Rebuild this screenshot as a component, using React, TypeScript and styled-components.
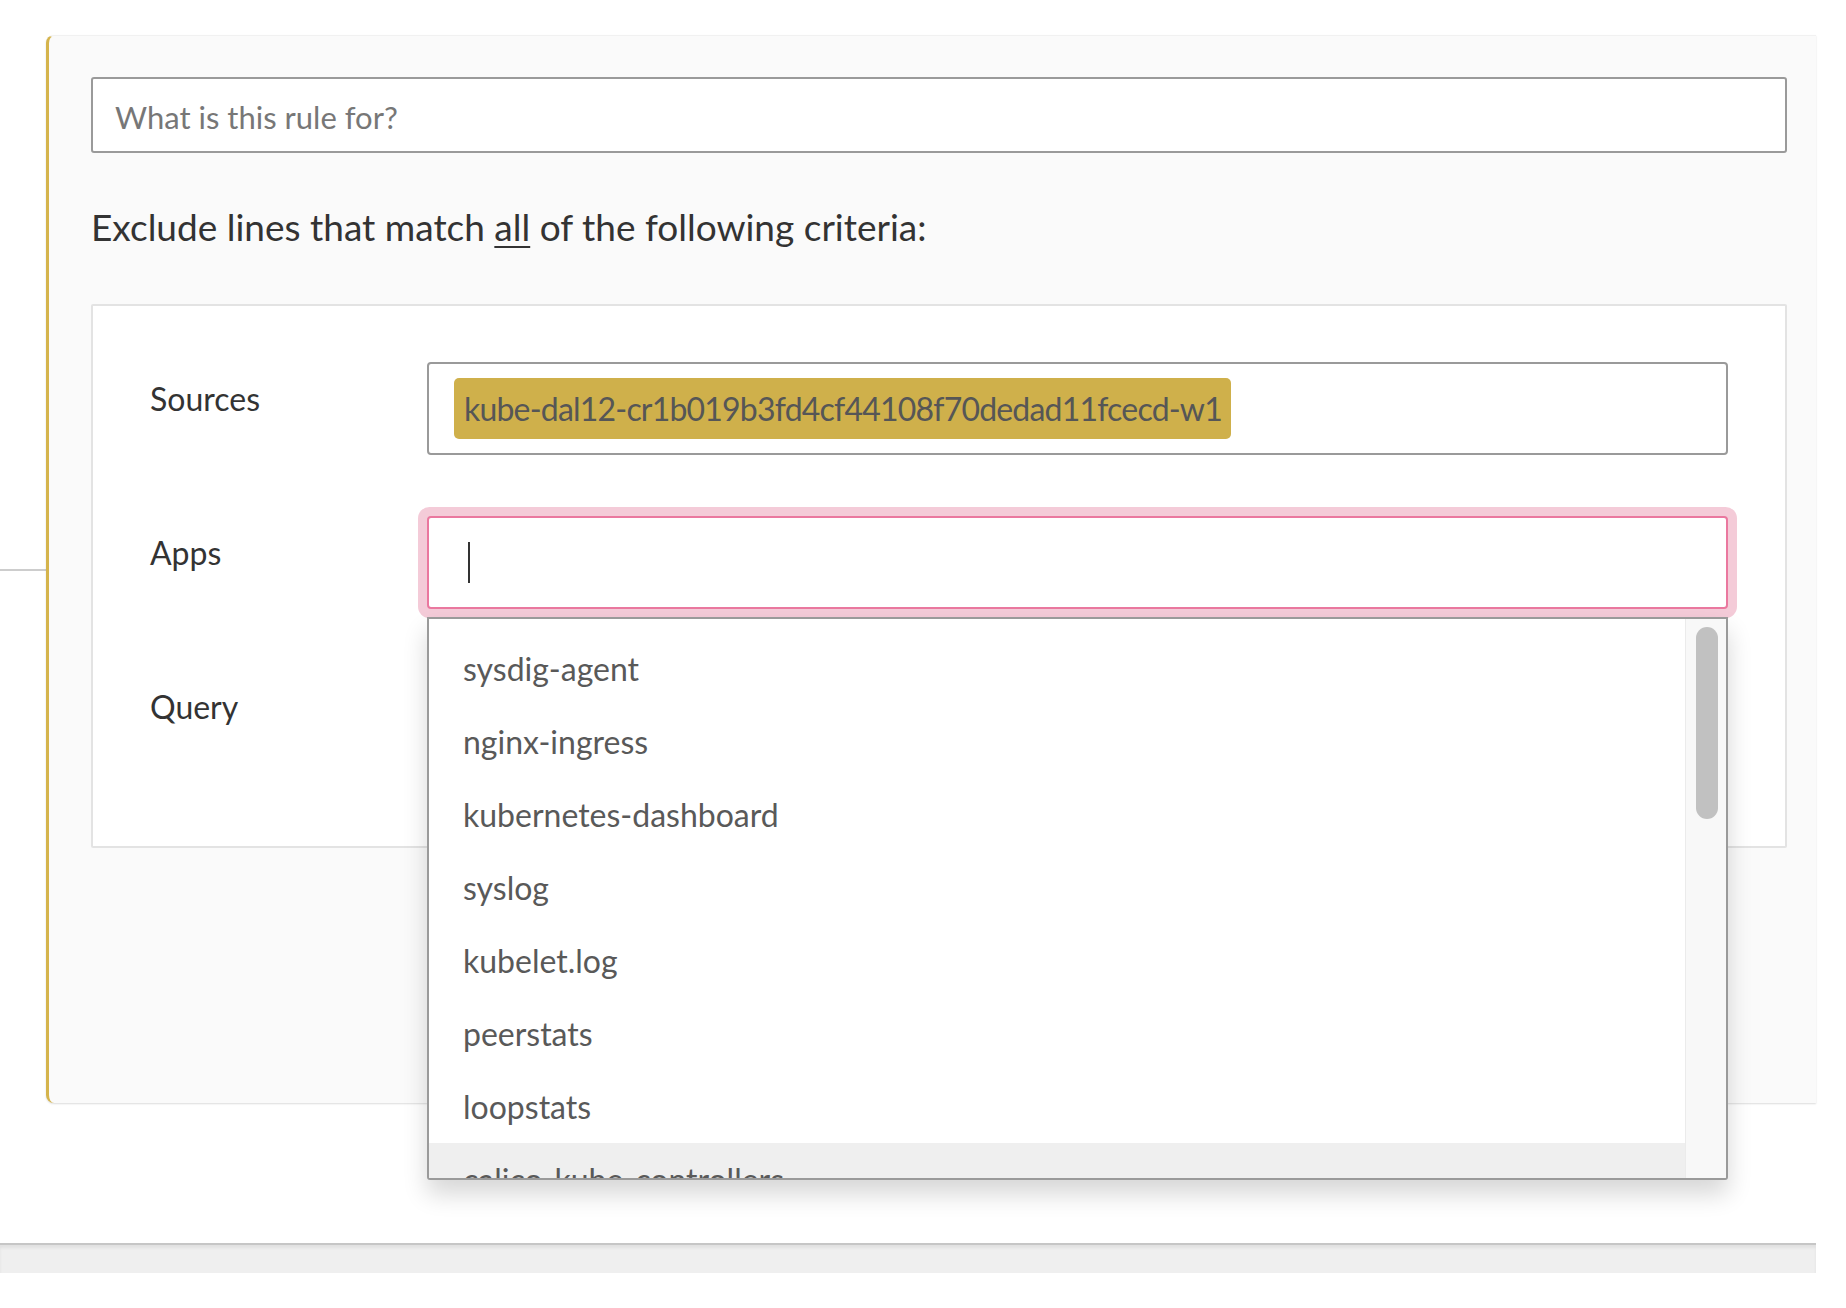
import React from "react";
import styled, { createGlobalStyle } from "styled-components";

const GlobalStyle = createGlobalStyle`
  html, body {
    margin: 0;
    padding: 0;
    background: #ffffff;
  }
  body {
    font-family: Lato, "Liberation Sans", sans-serif;
    color: #333;
  }
  * { box-sizing: border-box; }
`;

const Page = styled.div`
  width: 1846px;
  height: 1308px;
  padding-top: 35px;
  display: flex;
  flex-direction: column;
  overflow: hidden;
`;

const MainRow = styled.div`
  display: flex;
  align-items: flex-start;
`;

const Connector = styled.div`
  width: 46px;
  height: 2px;
  margin-top: 534px;
  background: #cdcdcd;
  flex-shrink: 0;
`;

const Card = styled.section`
  width: 1770px;
  height: 1068px;
  flex-shrink: 0;
  background: #fafafa;
  border-left: 3px solid #d5b44c;
  border-top: 1px solid #f1f1f1;
  border-radius: 8px 0 0 8px;
  box-shadow: 0 1px 2px rgba(0, 0, 0, 0.14);
  padding: 41px 29px 0 42px;
  display: flex;
  flex-direction: column;
`;

const DescriptionInput = styled.div`
  height: 76px;
  border: 2px solid #9a9a9a;
  border-radius: 3px;
  background: #fff;
  display: flex;
  align-items: center;
  padding: 4px 0 0 22px;
  font-size: 31px;
  color: #777;
`;

const Heading = styled.h2`
  margin: 52px 0 55px;
  font-size: 37px;
  line-height: 1.2;
  font-weight: 400;
  color: #333;
`;

const Underline = styled.span`
  text-decoration: underline;
  text-decoration-thickness: 2px;
  text-underline-offset: 5px;
`;

const CriteriaBox = styled.div`
  height: 544px;
  background: #fff;
  border: 2px solid #e3e3e3;
  border-radius: 2px;
  padding: 56px 57px 0 57px;
  display: flex;
  flex-direction: column;
  gap: 61px;
`;

const FieldRow = styled.div`
  display: grid;
  grid-template-columns: 277px 1fr;
  align-items: start;
`;

const Label = styled.div`
  padding-top: 18px;
  font-size: 32px;
  line-height: 1.2;
  color: #333;
`;

const FieldWrap = styled.div`
  position: relative;
`;

const Field = styled.div<{ $focused?: boolean }>`
  height: 93px;
  border: 2px solid ${(p) => (p.$focused ? "#ea789f" : "#9a9a9a")};
  border-radius: 4px;
  background: #fff;
  padding: 14px 25px;
  display: flex;
  align-items: center;
  box-shadow: ${(p) => (p.$focused ? "0 0 0 9px #f4cbd8" : "none")};
`;

const Tag = styled.span`
  height: 61px;
  line-height: 61px;
  padding: 0 9px 0 10px;
  background: #cfb04b;
  border-radius: 5px;
  font-size: 32px;
  letter-spacing: -0.8px;
  color: #565656;
  white-space: nowrap;
`;

const Caret = styled.span`
  width: 2px;
  height: 41px;
  margin-left: 14px;
  background: #333;
`;

const Dropdown = styled.div`
  position: absolute;
  left: 0;
  right: 0;
  top: 101px;
  height: 563px;
  z-index: 10;
  background: #fff;
  border: 2px solid #9a9a9a;
  border-radius: 0 0 3px 3px;
  box-shadow: 0 14px 24px rgba(0, 0, 0, 0.16);
  display: flex;
  overflow: hidden;
`;

const OptionList = styled.ul`
  flex: 1;
  margin: 0;
  padding: 13px 0 0;
  list-style: none;
  overflow: hidden;
`;

const Option = styled.li<{ $hover?: boolean }>`
  height: 73px;
  display: flex;
  align-items: center;
  padding-left: 34px;
  font-size: 32px;
  color: #595959;
  background: ${(p) => (p.$hover ? "#efefef" : "transparent")};
  white-space: nowrap;
`;

const ScrollTrack = styled.div`
  width: 41px;
  flex-shrink: 0;
  background: #f8f8f8;
  border-left: 1px solid #ebebeb;
  padding: 8px 0 0 10px;
`;

const ScrollThumb = styled.div`
  width: 22px;
  height: 192px;
  border-radius: 11px;
  background: #c1c1c1;
`;

const BottomBar = styled.div`
  width: 1816px;
  height: 30px;
  margin-top: 140px;
  background: #efefef;
  border-top: 2px solid #c6c6c6;
  box-shadow: inset 0 3px 3px rgba(0, 0, 0, 0.06);
`;

const apps = [
  "sysdig-agent",
  "nginx-ingress",
  "kubernetes-dashboard",
  "syslog",
  "kubelet.log",
  "peerstats",
  "loopstats",
  "calico-kube-controllers",
];

export default function App() {
  return (
    <>
      <GlobalStyle />
      <Page>
        <MainRow>
          <Connector />
          <Card>
            <DescriptionInput>What is this rule for?</DescriptionInput>
            <Heading>
              Exclude lines that match <Underline>all</Underline> of the following criteria:
            </Heading>
            <CriteriaBox>
              <FieldRow>
                <Label>Sources</Label>
                <FieldWrap>
                  <Field>
                    <Tag>kube-dal12-cr1b019b3fd4cf44108f70dedad11fcecd-w1</Tag>
                  </Field>
                </FieldWrap>
              </FieldRow>
              <FieldRow>
                <Label>Apps</Label>
                <FieldWrap>
                  <Field $focused>
                    <Caret />
                  </Field>
                  <Dropdown>
                    <OptionList>
                      {apps.map((a, i) => (
                        <Option key={a} $hover={i === 7}>
                          {a}
                        </Option>
                      ))}
                    </OptionList>
                    <ScrollTrack>
                      <ScrollThumb />
                    </ScrollTrack>
                  </Dropdown>
                </FieldWrap>
              </FieldRow>
              <FieldRow>
                <Label>Query</Label>
                <FieldWrap>
                  <Field />
                </FieldWrap>
              </FieldRow>
            </CriteriaBox>
          </Card>
        </MainRow>
        <BottomBar />
      </Page>
    </>
  );
}
